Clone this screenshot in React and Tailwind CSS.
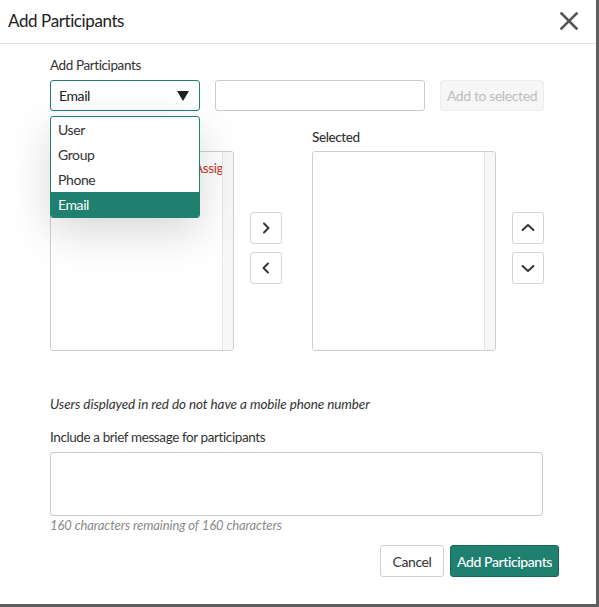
import React from "react";

const font = { fontFamily: "'Source Sans Pro', Lato, 'Open Sans', sans-serif" };

function Chevron({ dir }) {
  const d = {
    right: "M7 4.5 L11.5 9 L7 13.5",
    left: "M11 4.5 L6.5 9 L11 13.5",
    up: "M3.5 11 L9 6 L14.5 11",
    down: "M3.5 7 L9 12 L14.5 7",
  }[dir];
  return (
    <svg width="18" height="18" viewBox="0 0 18 18" fill="none">
      <path d={d} stroke="#333" strokeWidth="1.9" strokeLinecap="round" strokeLinejoin="round" />
    </svg>
  );
}

function IconButton({ dir }) {
  return (
    <button className="w-[32px] h-[32px] flex items-center justify-center border border-[#d4d4d4] rounded-[3px] bg-white">
      <Chevron dir={dir} />
    </button>
  );
}

function ListBox({ children }) {
  return (
    <div className="relative w-[184px] h-[200px] border border-[#cfcfcf] rounded-[3px] bg-white flex overflow-hidden">
      <div className="flex-1 overflow-hidden">{children}</div>
      <div className="w-[11px] h-full bg-[#f7f7f7] border-l border-[#e6e6e6]" />
    </div>
  );
}

export default function App() {
  return (
    <div className="w-[599px] h-[607px] bg-[#5e5e5e] tracking-[-0.4px]" style={font}>
      <div className="w-[596px] h-[604px] bg-white flex flex-col text-[#333]">
        <div className="h-[44px] border-b border-[#e5e5e5] flex items-center justify-between pl-[8px] pr-[17px]">
          <h1 className="text-[17px] text-[#222] leading-none -mt-[2px]">Add Participants</h1>
          <svg width="20" height="20" viewBox="0 0 20 20" className="-mt-[2px]">
            <path d="M2.5 2.5 L17.5 17.5 M17.5 2.5 L2.5 17.5" stroke="#555" strokeWidth="2.6" strokeLinecap="square" />
          </svg>
        </div>

        <div className="relative pl-[50px] flex flex-col">
          <div className="mt-[13px] text-[13.5px] leading-[16px] text-[#333]">Add Participants</div>

          <div className="mt-[7px] flex items-center">
            <div className="w-[150px] h-[31px] border border-[#1f7f70] rounded-[3px] flex items-center justify-between pl-[8px] pr-[10px] text-[14px] text-[#222]">
              <span>Email</span>
              <svg width="12" height="10" viewBox="0 0 12 10">
                <path d="M0 0 H12 L6 10 Z" fill="#222" />
              </svg>
            </div>
            <div className="ml-[15px] w-[210px] h-[31px] border border-[#cccccc] rounded-[3px] bg-white" />
            <button className="ml-[15px] w-[104px] h-[31px] bg-[#f6f6f6] border border-[#ededed] rounded-[3px] text-[14px] text-[#bdbdbd]">
              Add to selected
            </button>
          </div>

          <div className="mt-[18px] flex">
            <div className="flex flex-col">
              <div className="h-[16px]" />
              <div className="mt-[6px]">
                <ListBox>
                  <div className="pl-[8px] pt-[6px] text-[13.5px] text-[#d0342c] whitespace-nowrap">
                    Major Incident Manager Assignment
                  </div>
                </ListBox>
              </div>
            </div>

            <div className="ml-[16px] mr-[30px] pt-[83px] flex flex-col gap-[8px]">
              <IconButton dir="right" />
              <IconButton dir="left" />
            </div>

            <div className="flex flex-col">
              <div className="text-[13.5px] leading-[16px] h-[16px] font-medium text-[#333]">Selected</div>
              <div className="mt-[6px]">
                <ListBox />
              </div>
            </div>

            <div className="ml-[16px] pt-[83px] flex flex-col gap-[8px]">
              <IconButton dir="up" />
              <IconButton dir="down" />
            </div>
          </div>

          <p className="mt-[45px] text-[13.5px] leading-[16px] italic tracking-[-0.1px] text-[#333]">
            Users displayed in red do not have a mobile phone number
          </p>

          <div className="mt-[17px] text-[13.5px] leading-[16px] text-[#333]">Include a brief message for participants</div>
          <div className="mt-[7px] w-[493px] h-[64px] border border-[#cccccc] rounded-[3px]" />
          <div className="mt-[1px] text-[13px] leading-[16px] italic tracking-[-0.1px] text-[#8a8a8a]">
            160 characters remaining of 160 characters
          </div>

          <div className="mt-[12px] pr-[37px] flex justify-end gap-[6px]">
            <button className="w-[64px] h-[32px] border border-[#d0d0d0] rounded-[3px] bg-white text-[14px] text-[#333]">
              Cancel
            </button>
            <button className="w-[109px] h-[32px] border border-[#17685c] rounded-[3px] bg-[#1f8070] text-[14px] font-medium text-white">
              Add Participants
            </button>
          </div>

          {/* open option menu for the participant type select */}
          <div className="absolute left-[50px] top-[72px] w-[150px] border border-[#1f7f70] rounded-[3px] bg-white shadow-[0_14px_44px_rgba(0,0,0,0.16)] overflow-hidden text-[14px]">
            <div className="h-[25px] pl-[7px] flex items-center text-[#333]">User</div>
            <div className="h-[25px] pl-[7px] flex items-center text-[#333]">Group</div>
            <div className="h-[25px] pl-[7px] flex items-center text-[#333]">Phone</div>
            <div className="h-[25px] pl-[7px] flex items-center bg-[#1f8070] text-white">Email</div>
          </div>
        </div>
      </div>
    </div>
  );
}
